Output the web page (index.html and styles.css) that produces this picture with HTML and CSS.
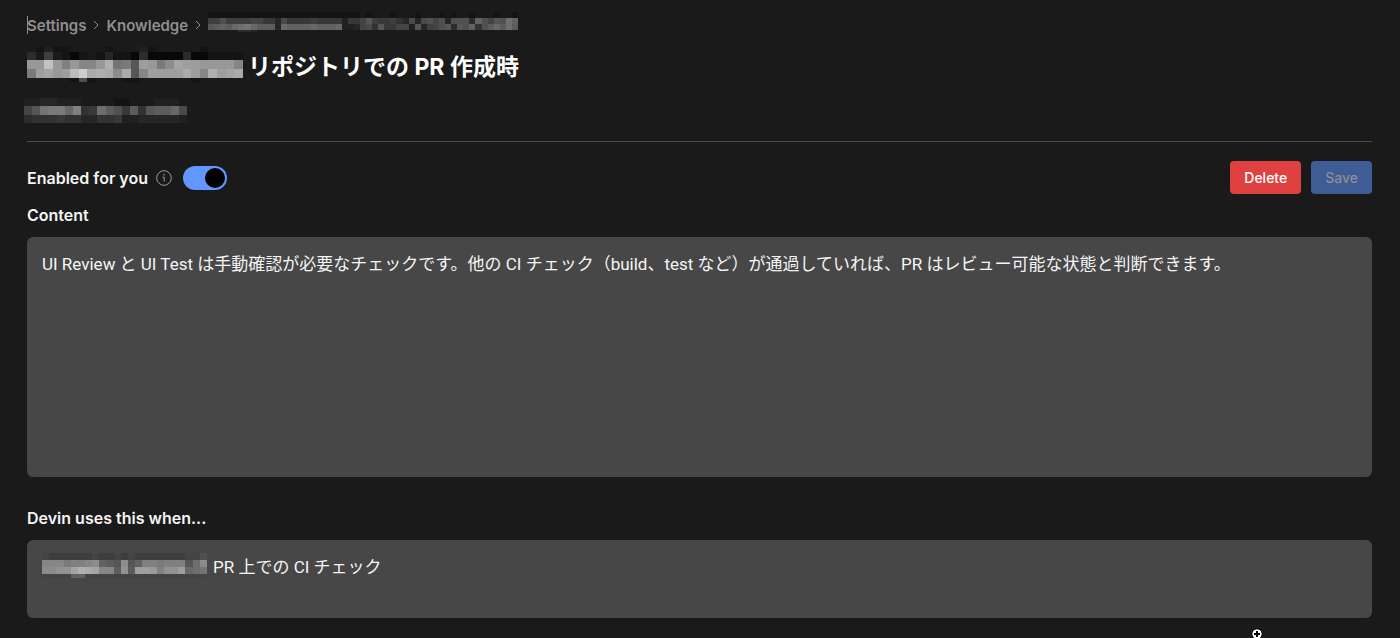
FILE: index.html
```
<!DOCTYPE html>
<html lang="ja">
<head>
    <meta charset="UTF-8">
    <meta name="viewport" content="width=device-width, initial-scale=1.0">
    <title>Knowledge - Settings</title>
    <link rel="stylesheet" href="styles.css">
</head>
<body>

    <main>
        <nav class="breadcrumb">
            <span class="caret"></span>
            <a href="#settings">Settings</a>
            <svg class="chevron" viewBox="0 0 6 10"><path d="M1 1l4 4-4 4"/></svg>
            <a href="#knowledge">Knowledge</a>
            <svg class="chevron" viewBox="0 0 6 10"><path d="M1 1l4 4-4 4"/></svg>
            <svg class="mosaic mosaic-crumb" data-mosaic="crumb"></svg>
        </nav>

        <h1>
            <svg class="mosaic mosaic-title" data-mosaic="title"></svg>
            <span>リポジトリでの PR 作成時</span>
        </h1>

        <svg class="mosaic mosaic-meta" data-mosaic="meta"></svg>

        <hr>

        <form id="knowledgeForm">
            <div class="toolbar">
                <label for="enabled">Enabled for you</label>
                <svg class="info" viewBox="0 0 16 16">
                    <circle cx="8" cy="8" r="7.3"/>
                    <path d="M6.5 7.2h1.7v4.2"/>
                    <circle class="dot" cx="8" cy="4.8" r="0.8"/>
                </svg>
                <input type="checkbox" id="enabled" class="switch" checked>
                <div class="actions">
                    <button type="button" class="delete">Delete</button>
                    <button type="submit" class="save" disabled>Save</button>
                </div>
            </div>

            <label for="content">Content</label>
            <textarea id="content" class="content">UI Review と UI Test は手動確認が必要なチェックです。他の CI チェック（build、test など）が通過していれば、PR はレビュー可能な状態と判断できます。</textarea>

            <label for="trigger">Devin uses this when...</label>
            <div class="trigger-field">
                <textarea id="trigger" class="trigger">PR 上での CI チェック</textarea>
                <svg class="mosaic mosaic-trigger" data-mosaic="trigger"></svg>
            </div>
        </form>
    </main>

    <svg class="pointer" viewBox="0 0 12 12">
        <circle cx="6" cy="6" r="5.2"/>
        <path d="M6 3v6M3 6h6"/>
    </svg>

    <script src="mosaic.js"></script>
</body>
</html>
```

FILE: styles.css
```
* {
    box-sizing: border-box;
}

body {
    margin: 0;
    background-color: #1a1a1a;
    color: #f5f5f5;
    font-family: Inter, "Noto Sans CJK JP", sans-serif;
    font-size: 16px;
    overflow: hidden;
}

main {
    padding: 12px 28px 20px 27px;
}

.mosaic {
    display: block;
    flex: none;
}

.breadcrumb {
    position: relative;
    display: flex;
    align-items: center;
    height: 26px;
    font-size: 15px;
    font-weight: 600;
}

.breadcrumb a {
    color: #8f8f8f;
    text-decoration: none;
}

.caret {
    position: absolute;
    left: 0;
    top: 4px;
    width: 1px;
    height: 18px;
    background-color: #8f8f8f;
}

.chevron {
    width: 6px;
    height: 10px;
    margin: 0 7px;
    fill: none;
    stroke: #8f8f8f;
}

.mosaic-crumb {
    align-self: flex-start;
    width: 310px;
    height: 20px;
}

h1 {
    display: flex;
    align-items: flex-start;
    gap: 5px;
    margin: 9px 0;
    font-size: 23px;
    font-weight: 700;
    line-height: 41px;
    color: #fff;
}

.mosaic-title {
    width: 216px;
    height: 35px;
}

.mosaic-meta {
    width: 163px;
    height: 25px;
    margin-top: 10px;
    margin-left: -3px;
}

hr {
    height: 1px;
    margin: 18px 0 19px;
    border: none;
    background-color: #4a4a4a;
}

label {
    display: block;
    font-weight: 600;
    line-height: 24px;
}

.toolbar {
    display: flex;
    align-items: center;
    margin-bottom: 9px;
}

.info {
    width: 16px;
    height: 16px;
    margin: 0 11px 0 8px;
    fill: none;
    stroke: #9a9a9a;
}

.info .dot {
    fill: #9a9a9a;
    stroke: none;
}

.switch {
    appearance: none;
    width: 44px;
    height: 24px;
    margin: 0;
    padding: 2px;
    border-radius: 12px;
    background-color: #555;
    cursor: pointer;
}

.switch::before {
    content: "";
    display: block;
    width: 20px;
    height: 20px;
    border-radius: 50%;
    background-color: #000;
}

.switch:checked {
    background-color: #6297ff;
}

.switch:checked::before {
    margin-left: auto;
}

.actions {
    display: flex;
    gap: 10px;
    margin-left: auto;
}

button {
    height: 33px;
    padding: 0 14px;
    border: none;
    border-radius: 4px;
    font-family: inherit;
    font-size: 14px;
    font-weight: 500;
    cursor: pointer;
}

.delete {
    background-color: #df4040;
    color: #fff;
}

.save {
    background-color: #3f5c96;
    color: #8c909a;
}

textarea {
    display: block;
    width: 100%;
    padding: 15px;
    border: none;
    border-radius: 6px;
    outline: none;
    background-color: #474747;
    color: #f5f5f5;
    font-family: Roboto, "Noto Sans CJK JP", sans-serif;
    font-size: 17px;
    line-height: 25px;
    resize: none;
}

.content {
    height: 240px;
    margin: 10px 0 29px;
}

.trigger-field {
    position: relative;
    margin-top: 10px;
}

.trigger {
    height: 78px;
    text-indent: 171px;
}

.mosaic-trigger {
    position: absolute;
    left: 15px;
    top: 13px;
    width: 165px;
    height: 25px;
}

.pointer {
    position: absolute;
    left: 1251px;
    top: 628px;
    width: 12px;
    height: 12px;
    fill: #fff;
    stroke: #000;
}

.pointer path {
    stroke-width: 2;
}
```

FILE: mosaic.js
```
// Each character is a grey level in base 36, in steps of 6. heights are per row.
const mosaics = {
    crumb: {
        heights: [6, 6, 6, 2],
        rows: [
            '333333333333333333333333343444344434443434434443443',
            'aadaaaabb996c9999a9999599bea99a86c6cdbd6ddd7gdbedig',
            'efgfhijhfff6hgggghgggh556bc8e99bb5e6abde7edg8dfhfif',
            '444447764444444444444444444444444444444444444444444'
        ]
    },
    title: {
        heights: [5, 8, 9, 9, 4],
        rows: [
            '4353344443444534444434444',
            '74a4313436331711117113333',
            'ppwplpmmptjkeqpknrqqppppm',
            'kqrpqvystsnsemqqqqsqmtqrs',
            '444443d344433444444344444'
        ]
    },
    meta: {
        heights: [8, 9, 8],
        rows: [
            '55665554444334445554',
            'bejkkhl89ifd9f8effhc',
            '78889886688955666665'
        ]
    },
    trigger: {
        heights: [7, 7, 7, 4],
        rows: [
            'baaaaaabaababaaaaaaabbd',
            'mmmkllmngfenegllklllein',
            'nnoortsrmmfofqqplooqhij',
            'bbbbggbbbbbbbbbbbbbbbbb'
        ]
    }
};

document.querySelectorAll('[data-mosaic]').forEach(svg => {
    const { heights, rows } = mosaics[svg.dataset.mosaic];
    const columns = rows[0].length;
    const total = heights.reduce((sum, h) => sum + h, 0);
    let y = 0;
    let cells = '';

    rows.forEach((row, i) => {
        [...row].forEach((char, x) => {
            const level = parseInt(char, 36) * 6 + 2;
            cells += `<rect x="${x}" y="${y}" width="1" height="${heights[i]}" fill="rgb(${level},${level},${level})"/>`;
        });
        y += heights[i];
    });

    svg.setAttribute('viewBox', `0 0 ${columns} ${total}`);
    svg.setAttribute('preserveAspectRatio', 'none');
    svg.setAttribute('shape-rendering', 'crispEdges');
    svg.innerHTML = cells;
});
```
